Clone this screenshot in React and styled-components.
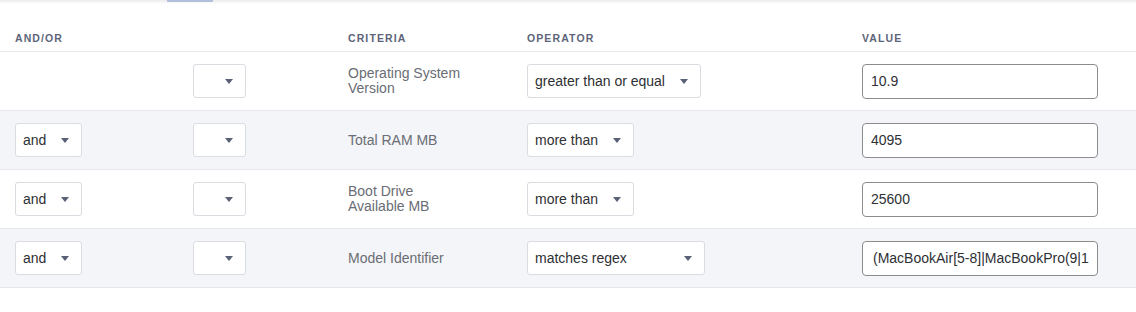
import React from "react";
import styled, { createGlobalStyle } from "styled-components";

const Global = createGlobalStyle`
  html, body { margin: 0; padding: 0; background: #fff; }
  body { font-family: "Liberation Sans", Arial, sans-serif; -webkit-font-smoothing: antialiased; }
  * { box-sizing: border-box; }
`;

const Page = styled.div`
  width: 1136px;
  height: 312px;
  background: #fff;
  overflow: hidden;
`;

const TopEdge = styled.div`
  height: 4px;
  background: linear-gradient(#ececee, #ffffff);
  display: flex;
`;

const TabMark = styled.div`
  margin-left: 167px;
  width: 46px;
  height: 2px;
  background: #b2c0dc;
`;

const cols = "178px 155px 179px 335px 1fr";

const HeaderRow = styled.div`
  display: grid;
  grid-template-columns: ${cols};
  padding-left: 15px;
  height: 48px;
  padding-top: 28px;
  border-bottom: 1px solid #e6e8ec;
`;

const HeadCell = styled.div`
  font-size: 10.5px;
  line-height: 13px;
  font-weight: 700;
  letter-spacing: 1.1px;
  color: #5d6479;
  text-transform: uppercase;
`;

const Row = styled.div`
  display: grid;
  grid-template-columns: ${cols};
  align-items: center;
  padding-left: 15px;
  height: 59px;
  border-bottom: 1px solid #e6e8ec;
  background: ${(p) => (p.$shaded ? "#f4f5f8" : "#fff")};
`;

const Cell = styled.div`
  display: flex;
  align-items: center;
`;

const Criteria = styled.div`
  font-size: 14px;
  line-height: 15px;
  color: #6a6d75;
  max-width: 116px;
`;

const Select = styled.div`
  width: ${(p) => p.$w}px;
  height: 34px;
  background: #fff;
  border: 1px solid #d9dce1;
  border-radius: 3px;
  display: flex;
  align-items: center;
  justify-content: space-between;
  padding: 0 12px 0 7px;
  font-size: 14px;
  color: #2e3034;
  white-space: nowrap;
`;

const Caret = () => (
  <svg width="8" height="5" viewBox="0 0 8 5" aria-hidden="true">
    <path d="M0 0 H8 L4 5 Z" fill="#5a6176" />
  </svg>
);

const ValueInput = styled.input`
  width: 236px;
  height: 35px;
  border: 1px solid #8c8c8c;
  border-radius: 4px;
  padding: 0 8px 0 ${(p) => (p.$indent ? 10 : 8)}px;
  font-family: "Liberation Sans", Arial, sans-serif;
  font-size: 14px;
  color: #2e3034;
  background: #fff;
  outline: none;
`;

const rows = [
  { andor: null, criteria: "Operating System Version", op: "greater than or equal", opW: 174, value: "10.9" },
  { andor: "and", criteria: "Total RAM MB", op: "more than", opW: 107, value: "4095" },
  { andor: "and", criteria: "Boot Drive Available MB", op: "more than", opW: 107, value: "25600" },
  {
    andor: "and",
    criteria: "Model Identifier",
    op: "matches regex",
    opW: 178,
    value: "(MacBookAir[5-8]|MacBookPro(9|1[0-6])|Macmini[6-8]|iMac1[3-8]|MacPro6)",
    indent: true,
  },
];

export default function App() {
  return (
    <Page>
      <Global />
      <TopEdge>
        <TabMark />
      </TopEdge>
      <HeaderRow>
        <HeadCell>And/Or</HeadCell>
        <HeadCell />
        <HeadCell>Criteria</HeadCell>
        <HeadCell>Operator</HeadCell>
        <HeadCell>Value</HeadCell>
      </HeaderRow>
      {rows.map((r, i) => (
        <Row key={i} $shaded={i % 2 === 1}>
          <Cell>
            {r.andor && (
              <Select $w={67}>
                <span>{r.andor}</span>
                <Caret />
              </Select>
            )}
          </Cell>
          <Cell>
            <Select $w={53}>
              <span />
              <Caret />
            </Select>
          </Cell>
          <Cell>
            <Criteria>{r.criteria}</Criteria>
          </Cell>
          <Cell>
            <Select $w={r.opW}>
              <span>{r.op}</span>
              <Caret />
            </Select>
          </Cell>
          <Cell>
            <ValueInput readOnly defaultValue={r.value} $indent={r.indent} />
          </Cell>
        </Row>
      ))}
    </Page>
  );
}
